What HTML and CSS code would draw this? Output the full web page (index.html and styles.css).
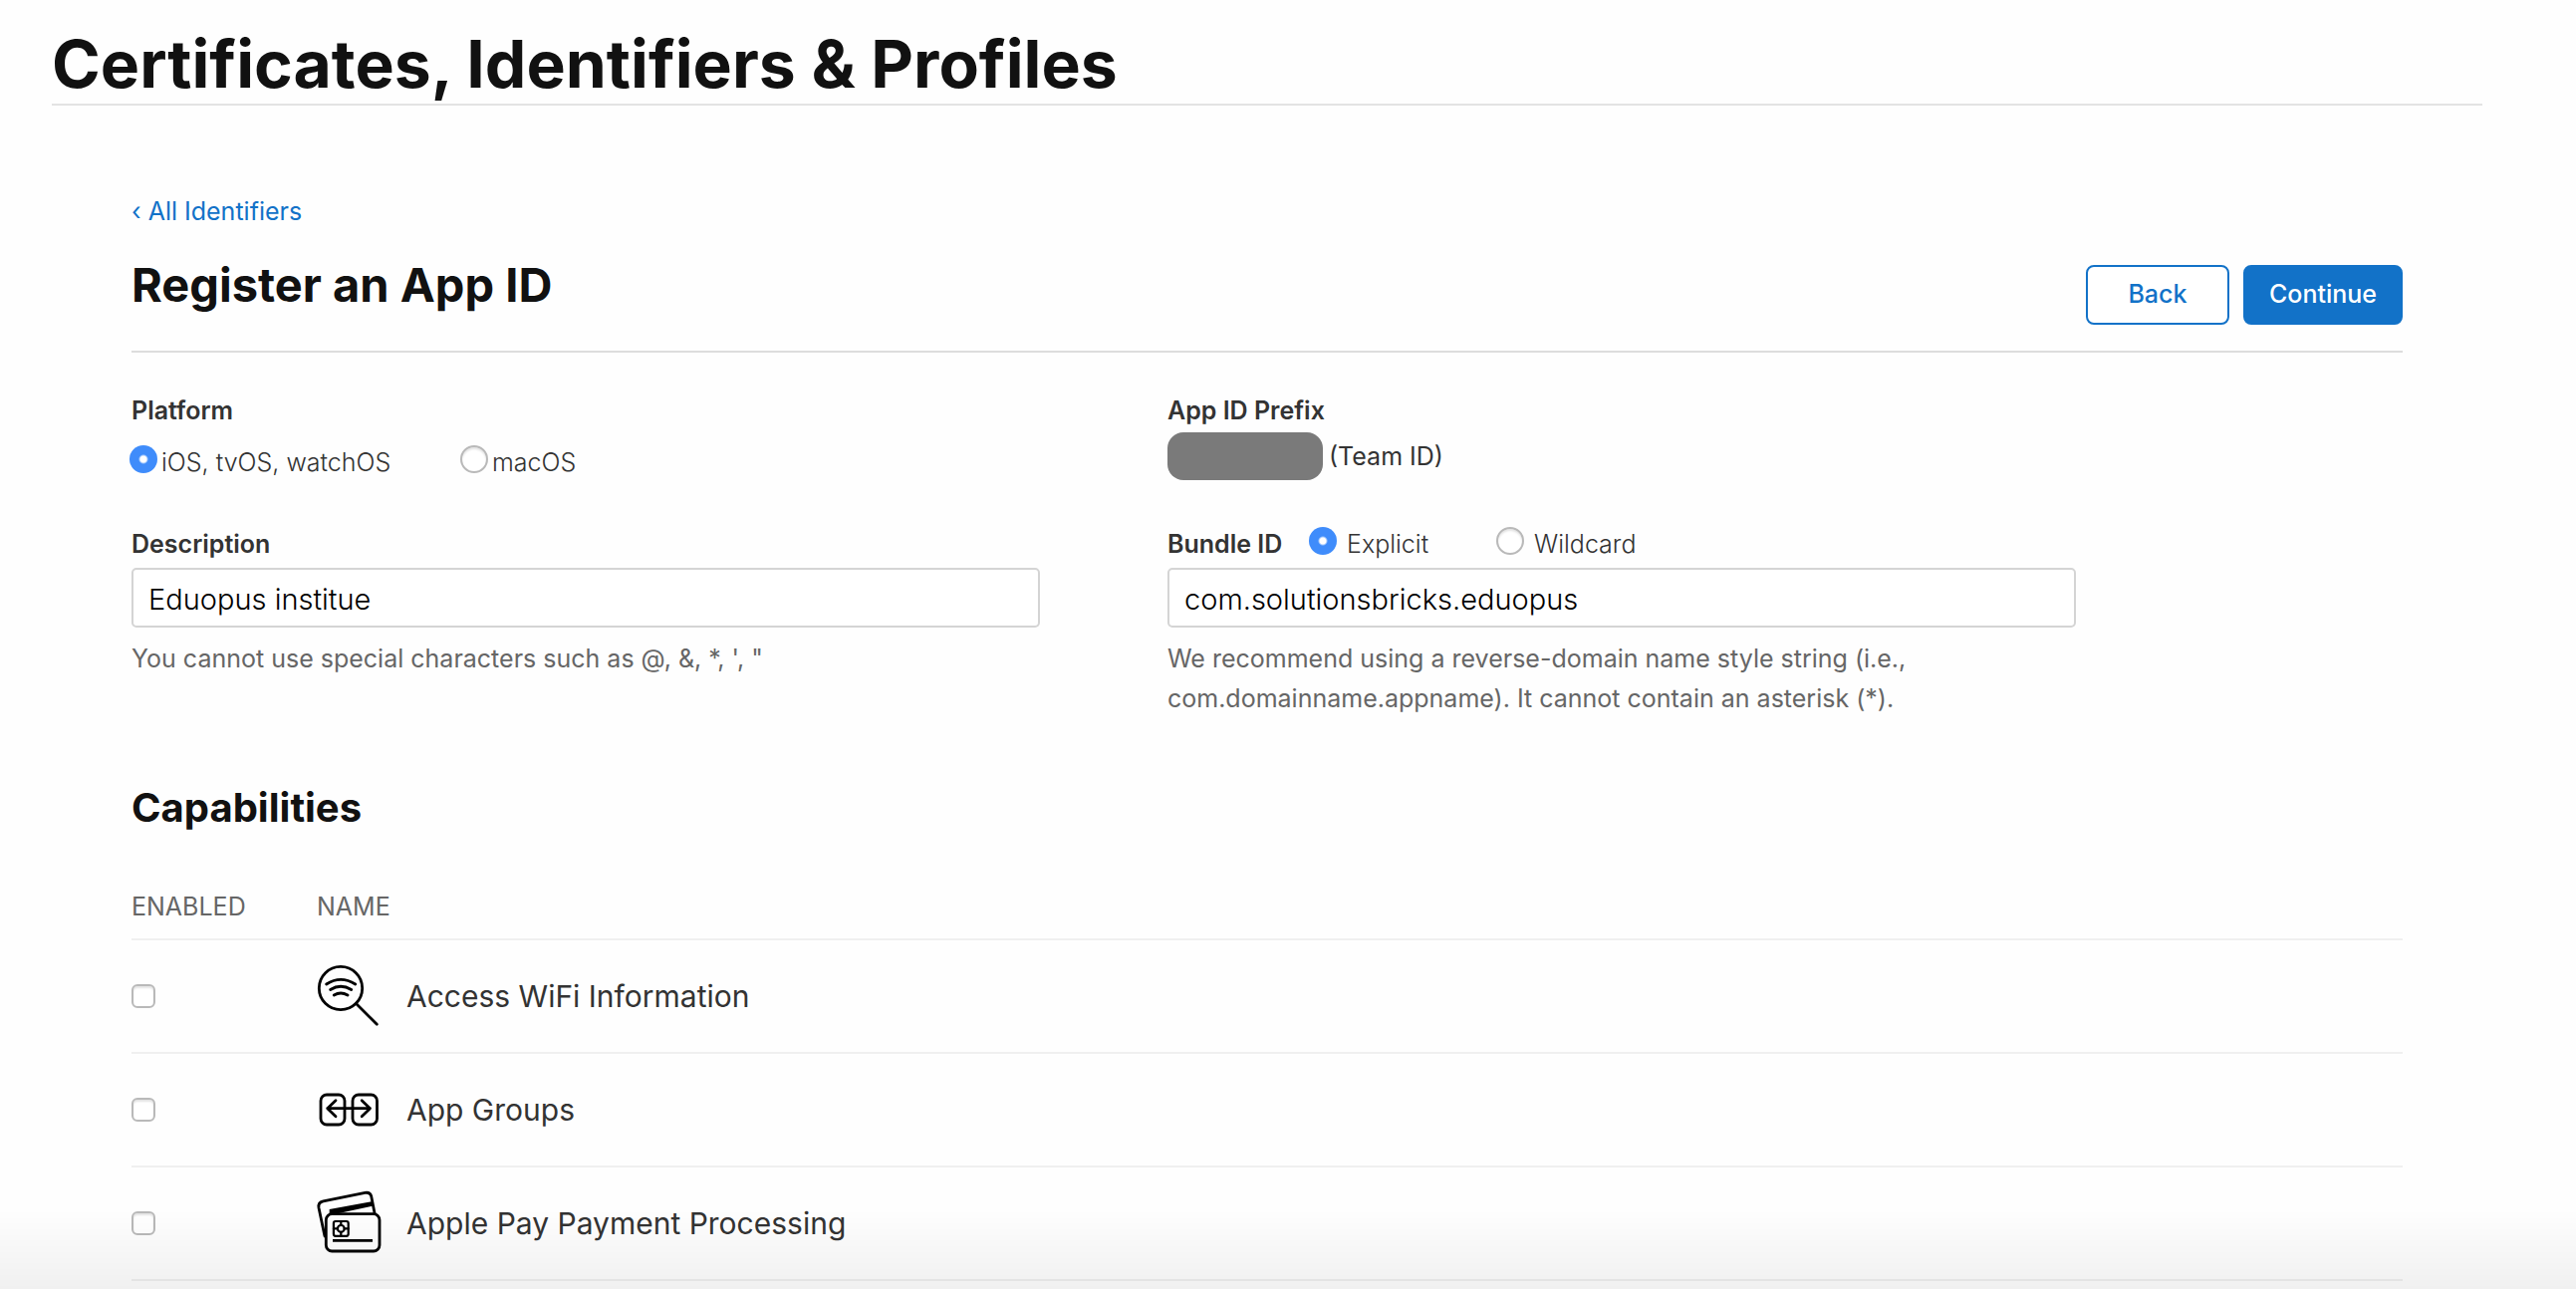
FILE: index.html
```html
<!DOCTYPE html>
<html lang="en">
<head>
    <meta charset="UTF-8">
    <meta name="viewport" content="width=device-width, initial-scale=1.0">
    <title>Register an App ID</title>
    <link rel="stylesheet" href="styles.css">
</head>
<body>
    <header class="page-header">
        <h1>Certificates, Identifiers &amp; Profiles</h1>
    </header>

    <main class="content">
        <a href="#" class="back-link">‹ All Identifiers</a>

        <div class="toolbar">
            <h2>Register an App ID</h2>
            <div class="actions">
                <button type="button" class="btn">Back</button>
                <button type="submit" form="app-id-form" class="btn btn-primary">Continue</button>
            </div>
        </div>

        <form id="app-id-form">
            <div class="form-grid">
                <div class="field" role="radiogroup" aria-labelledby="platform-label">
                    <div class="field-label" id="platform-label">Platform</div>
                    <div class="platforms">
                        <label class="platform"><input type="radio" name="platform" checked>iOS, tvOS, watchOS</label>
                        <label class="platform"><input type="radio" name="platform">macOS</label>
                    </div>
                </div>

                <div class="field">
                    <div class="field-label">App ID Prefix</div>
                    <div class="prefix"><span class="redacted"></span>(Team ID)</div>
                </div>

                <div class="field">
                    <label class="field-label" for="description">Description</label>
                    <input type="text" class="text-input" id="description" value="Eduopus institue">
                    <p class="hint">You cannot use special characters such as @, &amp;, *, ', "</p>
                </div>

                <div class="field">
                    <div class="bundle-row">
                        <label class="field-label" for="bundle-id">Bundle ID</label>
                        <label class="bundle-type"><input type="radio" name="bundle-type" checked>Explicit</label>
                        <label class="bundle-type"><input type="radio" name="bundle-type">Wildcard</label>
                    </div>
                    <input type="text" class="text-input" id="bundle-id" value="com.solutionsbricks.eduopus">
                    <p class="hint">We recommend using a reverse-domain name style string (i.e., com.domainname.appname). It cannot contain an asterisk (*).</p>
                </div>
            </div>

            <h3>Capabilities</h3>

            <table class="capabilities">
                <thead>
                    <tr>
                        <th class="col-enabled">ENABLED</th>
                        <th>NAME</th>
                    </tr>
                </thead>
                <tbody>
                    <tr>
                        <td><input type="checkbox" id="cap-wifi"></td>
                        <td>
                            <label class="capability" for="cap-wifi">
                                <svg class="icon" viewBox="0 0 64 64">
                                    <circle cx="24" cy="24" r="21.7"/>
                                    <path d="M39.5 39.5L60.3 60.3M9.7 20Q24 10.8 38.7 20M13.7 25.5Q24 19 34.7 25.5M17.3 31Q24 27 31 31"/>
                                </svg>
                                Access WiFi Information
                            </label>
                        </td>
                    </tr>
                    <tr>
                        <td><input type="checkbox" id="cap-groups"></td>
                        <td>
                            <label class="capability" for="cap-groups">
                                <svg class="icon" viewBox="0 0 64 64">
                                    <rect x="4" y="17" width="24" height="30" rx="6"/>
                                    <rect x="36" y="17" width="24.5" height="30" rx="6"/>
                                    <path d="M10.7 30.7H53.5M19 22.7L10.7 30.7L19 38.7M45.2 22.7L53.5 30.7L45.2 38.7"/>
                                </svg>
                                App Groups
                            </label>
                        </td>
                    </tr>
                    <tr>
                        <td><input type="checkbox" id="cap-pay"></td>
                        <td>
                            <label class="capability" for="cap-pay">
                                <svg class="icon" viewBox="0 0 64 64">
                                    <rect x="9.3" y="22.7" width="53.7" height="37.3" rx="6"/>
                                    <path d="M8 45L2 16.5Q1 11 6.5 9.8L48.5 1.4Q53.6 .5 54.8 5.2L58 21.5"/>
                                    <path class="solid" d="M12.7 18L56.3 10L57 14.6L22 22H12.7Z"/>
                                    <g class="chip">
                                        <rect x="16.9" y="30" width="14.8" height="14.8" rx="2"/>
                                        <circle cx="24.3" cy="37.4" r="3.4"/>
                                        <path d="M24.3 30V34M24.3 40.8V44.8M16.9 37.4H20.9M27.7 37.4H31.7"/>
                                    </g>
                                    <path class="strip" d="M16 49.3H56"/>
                                </svg>
                                Apple Pay Payment Processing
                            </label>
                        </td>
                    </tr>
                </tbody>
            </table>
        </form>
    </main>

    <div class="bottom-fade"></div>
</body>
</html>
```
FILE: styles.css
```css
* {
    margin: 0;
    padding: 0;
    box-sizing: border-box;
}

body {
    font-family: Inter, 'Liberation Sans', sans-serif;
    font-size: 25px;
    line-height: 40px;
    color: #333;
    background: #fefefe;
}

.page-header {
    margin: 0 94px 0 52px;
    padding-top: 24px;
    border-bottom: 2px solid #e3e3e3;
}

h1, h2, h3 {
    color: #111;
    font-weight: 700;
}

h1 {
    font-size: 66px;
    line-height: 80px;
}

h2 {
    font-size: 47px;
    line-height: 60px;
}

h3 {
    margin-top: 66px;
    font-size: 40px;
    line-height: 48px;
}

.content {
    margin: 0 174px 0 132px;
    padding-top: 86px;
}

.back-link {
    color: #1272c8;
    text-decoration: none;
}

.toolbar {
    display: flex;
    justify-content: space-between;
    align-items: flex-start;
    margin-top: 24px;
    padding-bottom: 26px;
    border-bottom: 2px solid #ddd;
}

.actions {
    display: flex;
    gap: 14px;
    padding-top: 10px;
}

.btn {
    min-width: 144px;
    height: 60px;
    padding: 0 24px 2px;
    border: 2px solid #1272c8;
    border-radius: 8px;
    background: #fff;
    color: #1272c8;
    font: inherit;
    font-weight: 500;
}

.btn-primary {
    min-width: 160px;
    background: #1272c8;
    color: #fff;
}

.form-grid {
    display: grid;
    grid-template-columns: 40% 40%;
    column-gap: 128px;
    row-gap: 42px;
    padding-top: 38px;
}

.field-label {
    display: block;
    font-weight: 600;
}

.platforms {
    display: flex;
    margin: 12px 0 0 -2px;
    font-weight: 300;
}

.platform,
.bundle-type {
    display: flex;
    align-items: center;
}

.platform {
    gap: 4px;
    min-width: 332px;
}

.prefix {
    display: flex;
    align-items: center;
    gap: 6px;
    margin-top: 2px;
}

.redacted {
    width: 156px;
    height: 48px;
    border-radius: 16px;
    background: #7a7a7a;
}

.bundle-row {
    display: flex;
    font-weight: 300;
}

.bundle-row .field-label {
    width: 142px;
}

.bundle-type {
    gap: 10px;
    min-width: 188px;
}

input[type="radio"] {
    appearance: none;
    width: 28px;
    height: 28px;
    margin-bottom: 6px;
    border: 2px solid #b9b9b9;
    border-radius: 50%;
    background: #fff;
    box-shadow: inset 0 2px 2px #e4e4e4;
}

input[type="radio"]:checked {
    border: none;
    background: radial-gradient(circle, #fff 3px, #3f8cfb 5px);
    box-shadow: none;
}

.text-input {
    display: block;
    width: 100%;
    height: 60px;
    margin-top: 4px;
    padding: 2px 15px 0;
    border: 2px solid #d4d4d4;
    border-radius: 5px;
    background: #fff;
    color: #000;
    font: inherit;
    font-size: 29px;
    font-weight: 300;
}

.hint {
    margin-top: 11px;
    color: #666;
}

.capabilities {
    width: 100%;
    margin-top: 42px;
    border-collapse: collapse;
}

.capabilities th {
    height: 66px;
    border-bottom: 2px solid #f0f0f0;
    color: #666;
    font-weight: 400;
    text-align: left;
}

.capabilities td {
    height: 114px;
    border-bottom: 2px solid #f0f0f0;
    vertical-align: middle;
}

.col-enabled {
    width: 186px;
}

input[type="checkbox"] {
    display: block;
    appearance: none;
    width: 24px;
    height: 24px;
    border: 2px solid #b9b9b9;
    border-radius: 6px;
    background: #fff;
    box-shadow: inset 0 2px 2px #e4e4e4;
}

.capability {
    display: flex;
    align-items: center;
    gap: 26px;
    font-size: 30px;
}

.icon {
    width: 64px;
    height: 64px;
    fill: none;
    stroke: #000;
    stroke-width: 2.8;
    stroke-linecap: round;
    stroke-linejoin: round;
    overflow: visible;
}

.icon .solid {
    fill: #000;
    stroke: none;
}

.icon .chip {
    stroke-width: 2.2;
}

.icon .strip {
    stroke-linecap: butt;
}

/* shade along the lower edge of the window */
.bottom-fade {
    position: fixed;
    left: 0;
    right: 0;
    bottom: 0;
    height: 80px;
    background: linear-gradient(rgba(0, 0, 0, 0), rgba(0, 0, 0, 0.055));
    pointer-events: none;
}
```
